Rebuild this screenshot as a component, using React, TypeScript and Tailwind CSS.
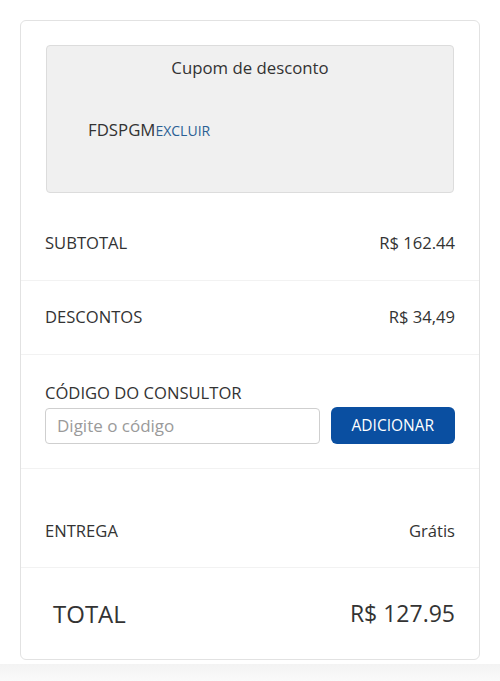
import React from "react";

export default function App() {
  return (
    <div className="w-[500px] h-[681px] bg-white overflow-hidden flex flex-col" style={{ fontFamily: '"Open Sans", "Liberation Sans", sans-serif' }}>
      <div className="pt-[20px] px-[20px]">
        <div className="border border-[#e2e2e2] rounded-[6px] bg-white text-[#333]">
          <div className="pt-[24px] px-[25px] pb-[13px]">
            <div className="h-[148px] bg-[#f0f0f0] border border-[#dcdcdc] rounded-[4px] flex flex-col">
              <div className="pt-[11px] text-center text-[16.8px] leading-[22px] text-[#333]">Cupom de desconto</div>
              <div className="mt-[40px] pl-[41px] flex items-baseline">
                <span className="text-[16.8px] leading-[22px] text-[#333]">FDSPGM</span>
                <span className="text-[14px] leading-[22px] text-[#2a5f94]">EXCLUIR</span>
              </div>
            </div>
          </div>
          <div className="h-[75px] flex items-center justify-between px-[24px] border-b border-[#f2f2f2] text-[16.6px]">
            <span>SUBTOTAL</span>
            <span>R$ 162.44</span>
          </div>
          <div className="h-[74px] flex items-center justify-between px-[24px] border-b border-[#f2f2f2] text-[16.6px]">
            <span>DESCONTOS</span>
            <span>R$ 34,49</span>
          </div>
          <div className="pt-[27px] pb-[24px] px-[24px] border-b border-[#f2f2f2]">
            <div className="text-[16.6px] leading-[22px]">CÓDIGO DO CONSULTOR</div>
            <div className="mt-[3px] flex items-center gap-[11px]">
              <input
                className="w-[276px] h-[36px] border border-[#cfcfcf] rounded-[4px] px-[11px] text-[17px] placeholder:text-[#9a9a9a] outline-none"
                placeholder="Digite o código"
              />
              <button className="w-[125px] h-[37px] rounded-[6px] bg-[#0a4fa1] text-white text-[15.5px]">ADICIONAR</button>
            </div>
          </div>
          <div className="pt-[51px] pb-[25px] px-[24px] flex items-center justify-between border-b border-[#f2f2f2] text-[16.6px] leading-[22px]">
            <span>ENTREGA</span>
            <span>Grátis</span>
          </div>
          <div className="h-[91px] flex items-center justify-between pl-[32px] pr-[24px] text-[24px]">
            <span>TOTAL</span>
            <span className="text-[23px]">R$ 127.95</span>
          </div>
        </div>
      </div>
      <div className="mt-[4px] flex-1 bg-gradient-to-b from-[#f3f3f3] to-[#fafafa]" />
    </div>
  );
}
